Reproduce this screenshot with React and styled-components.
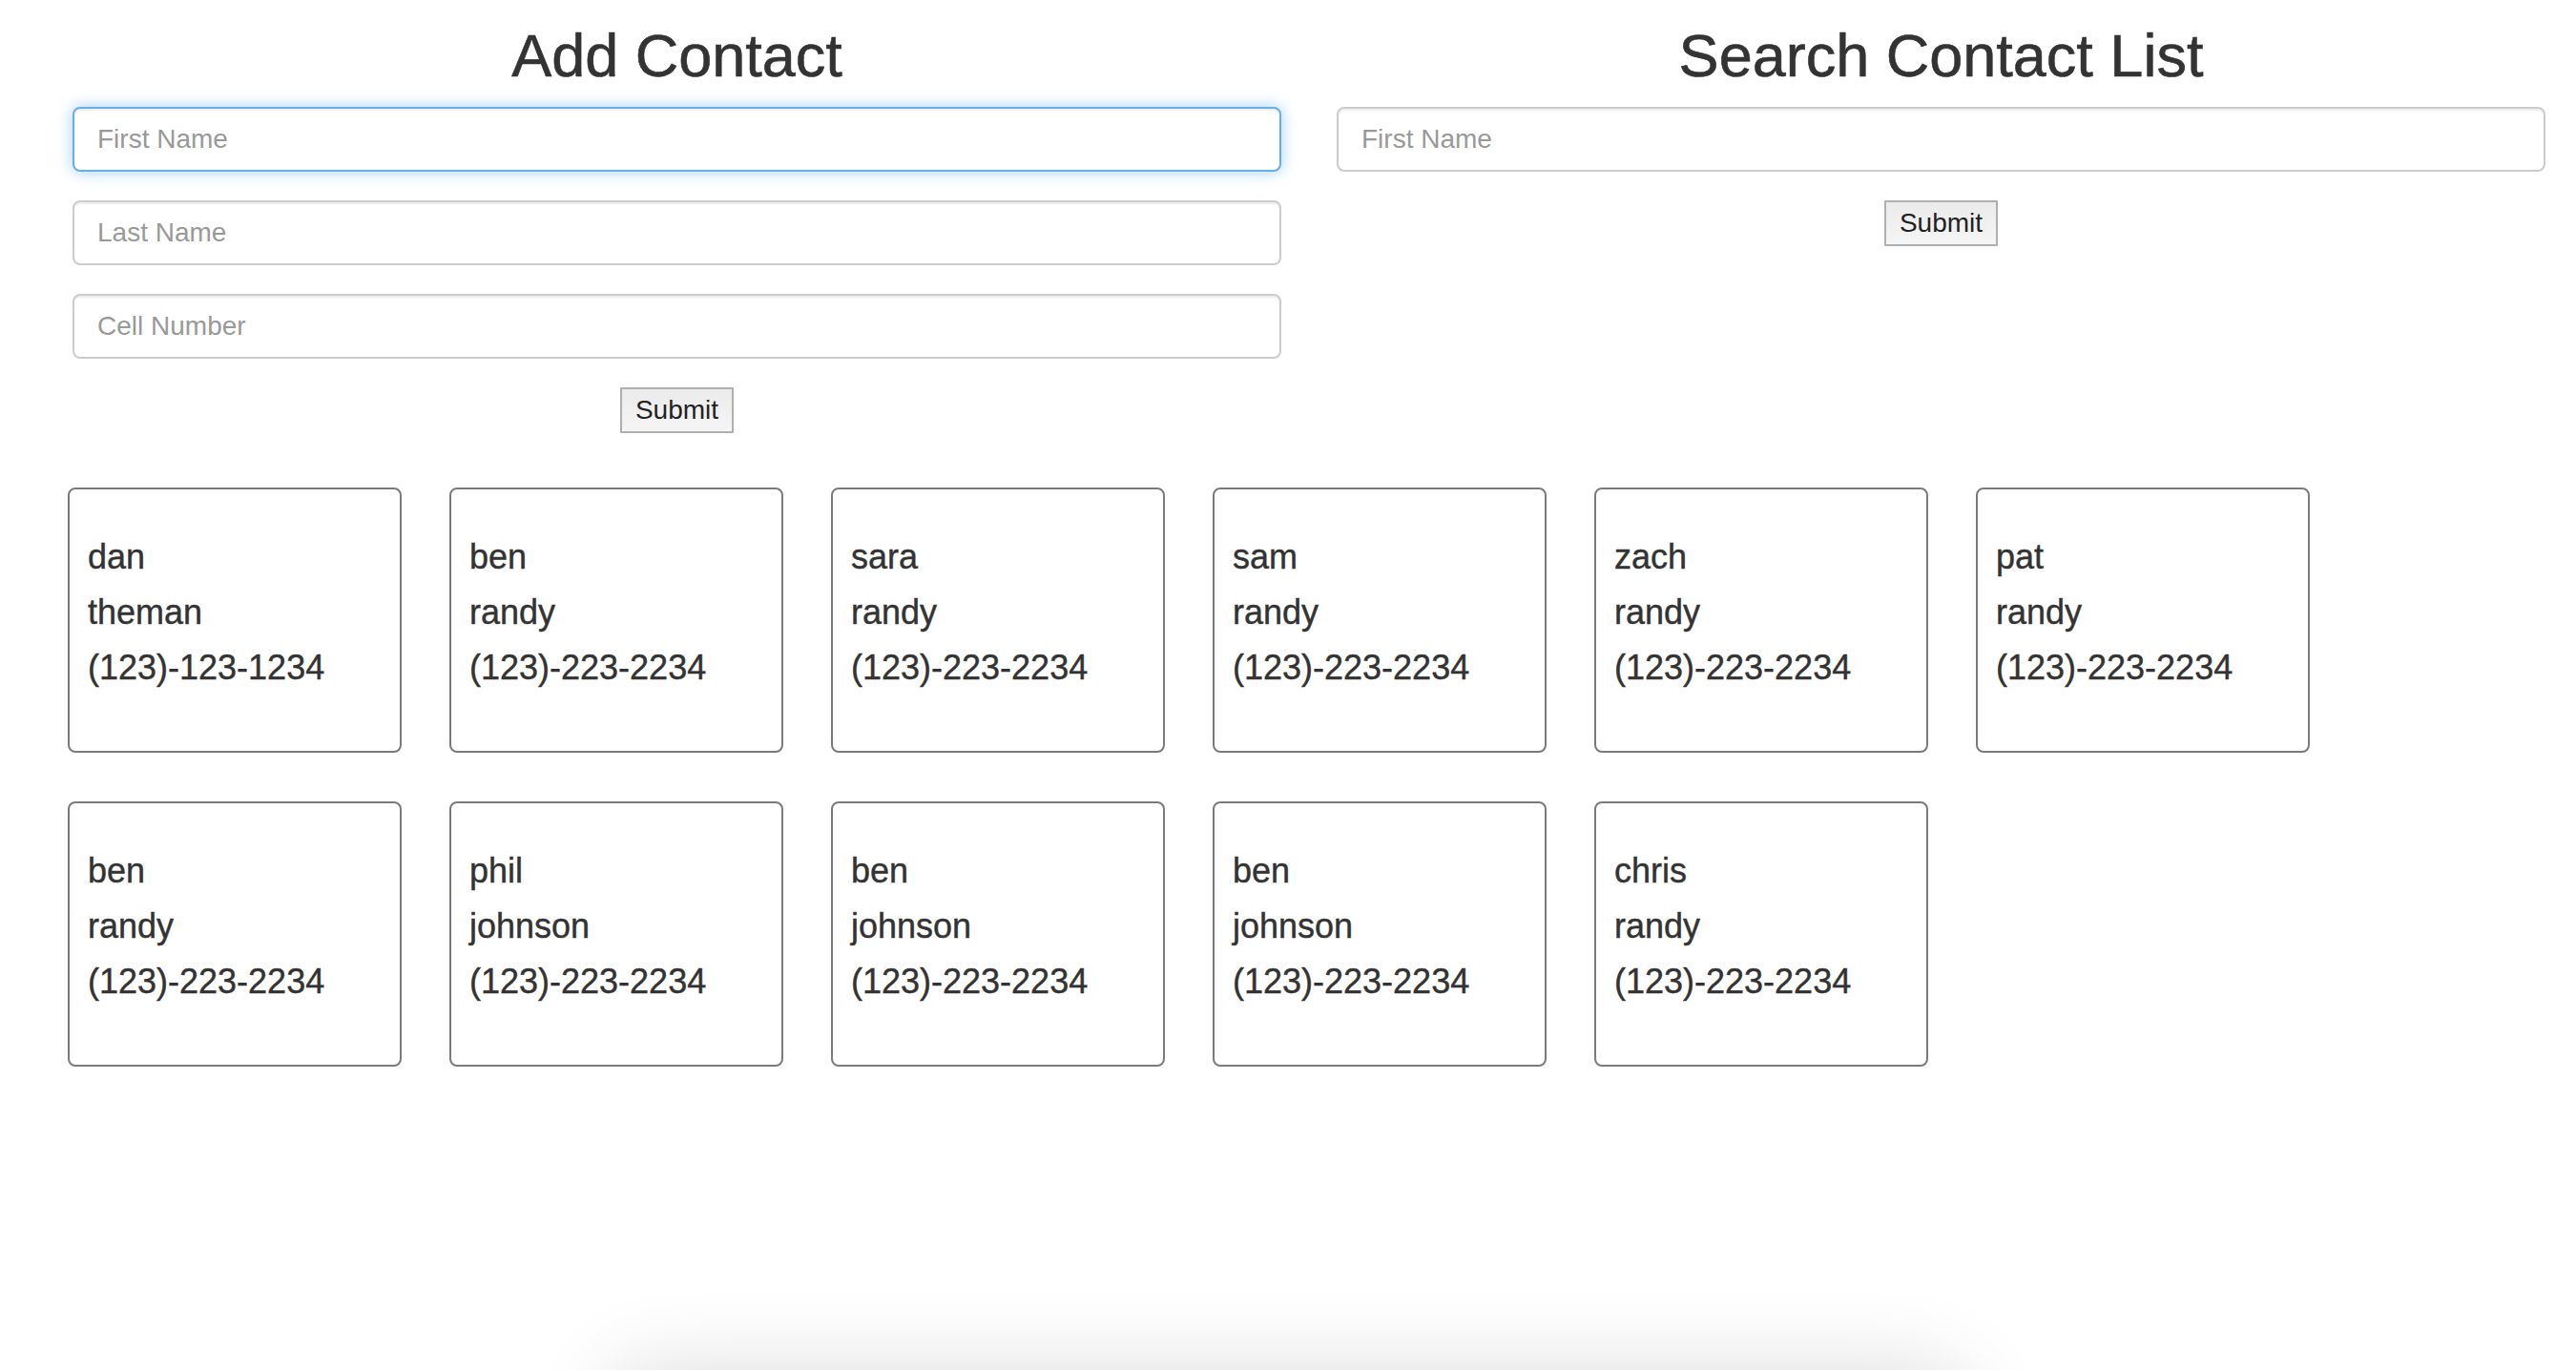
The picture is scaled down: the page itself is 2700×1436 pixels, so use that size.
import React from "react";
import styled, { createGlobalStyle } from "styled-components";

const GlobalStyle = createGlobalStyle`
  * {
    box-sizing: border-box;
  }
  body {
    margin: 0;
    background: #fff;
    color: #333;
    font-family: "Liberation Sans", Arial, Helvetica, sans-serif;
  }
`;

const Page = styled.div`
  padding: 25px 27px 0 71px;
  min-height: 1436px;
`;

const Forms = styled.div`
  display: grid;
  grid-template-columns: 1267px 1267px;
  column-gap: 58px;
  padding-left: 5px;
  align-items: start;
`;

const Panel = styled.form`
  display: flex;
  flex-direction: column;
  align-items: center;
`;

const Title = styled.h2`
  margin: 0 0 20px;
  font-size: 63px;
  line-height: 67px;
  font-weight: 500;
  color: #333;
  -webkit-text-stroke: 0.6px #333;
`;

const Field = styled.input`
  width: 100%;
  height: 68px;
  margin-bottom: 30px;
  padding: 12px 24px;
  font-family: inherit;
  font-size: 28px;
  color: #555;
  background: #fff;
  border: 2px solid ${({ $focused }) => ($focused ? "#66afe9" : "#ccc")};
  border-radius: 8px;
  outline: none;
  box-shadow: ${({ $focused }) =>
    $focused
      ? "inset 0 2px 2px rgba(0,0,0,.075), 0 0 16px rgba(102,175,233,.6)"
      : "inset 0 2px 2px rgba(0,0,0,.075)"};

  &::placeholder {
    color: #999;
  }
`;

const SubmitButton = styled.button`
  height: 48px;
  padding: 0 14px;
  font-family: inherit;
  font-size: 28px;
  color: #222;
  background: linear-gradient(#ebebeb, #f5f5f5);
  border: 2px solid #b0b0b0;
  border-radius: 1px;
  cursor: pointer;
`;

const Cards = styled.div`
  display: flex;
  flex-wrap: wrap;
  gap: 51px 50px;
  margin-top: 57px;
`;

const Card = styled.div`
  width: 350px;
  height: 278px;
  padding: 42px 19px 0;
  border: 2px solid #7b7b7b;
  border-radius: 8px;
  background: #fff;
`;

const Line = styled.div`
  font-size: 36px;
  line-height: 58px;
  color: #333;
  white-space: nowrap;
  -webkit-text-stroke: 0.4px #333;
`;

const Drawer = styled.div`
  position: fixed;
  left: 50%;
  bottom: -200px;
  width: 1420px;
  height: 200px;
  transform: translateX(-50%);
  background: #fff;
  border-radius: 40px;
  box-shadow: 0 0 90px rgba(0, 0, 0, 0.14);
`;

const contacts = [
  ["dan", "theman", "(123)-123-1234"],
  ["ben", "randy", "(123)-223-2234"],
  ["sara", "randy", "(123)-223-2234"],
  ["sam", "randy", "(123)-223-2234"],
  ["zach", "randy", "(123)-223-2234"],
  ["pat", "randy", "(123)-223-2234"],
  ["ben", "randy", "(123)-223-2234"],
  ["phil", "johnson", "(123)-223-2234"],
  ["ben", "johnson", "(123)-223-2234"],
  ["ben", "johnson", "(123)-223-2234"],
  ["chris", "randy", "(123)-223-2234"],
];

const App = () => {
  return (
    <>
      <GlobalStyle />
      <Page>
        <Forms>
          <Panel onSubmit={(e) => e.preventDefault()}>
            <Title>Add Contact</Title>
            <Field $focused placeholder="First Name" />
            <Field placeholder="Last Name" />
            <Field placeholder="Cell Number" />
            <SubmitButton type="submit">Submit</SubmitButton>
          </Panel>
          <Panel onSubmit={(e) => e.preventDefault()}>
            <Title>Search Contact List</Title>
            <Field placeholder="First Name" />
            <SubmitButton type="submit">Submit</SubmitButton>
          </Panel>
        </Forms>

        <Cards>
          {contacts.map(([first, last, cell], i) => (
            <Card key={i}>
              <Line>{first}</Line>
              <Line>{last}</Line>
              <Line>{cell}</Line>
            </Card>
          ))}
        </Cards>
      </Page>
      <Drawer />
    </>
  );
};

export default App;
